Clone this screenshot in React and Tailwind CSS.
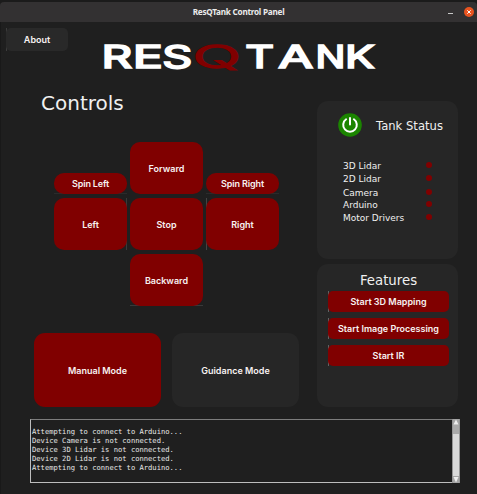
import React from "react";

const POPPINS = "font-['Inter','Open_Sans',sans-serif] font-semibold text-[#f7f1f1] whitespace-nowrap";
const DEJAVU = "font-['DejaVu_Sans',sans-serif] text-[#f0f0f0] whitespace-nowrap";

// Every button sits on a thin rectangle whose edge shows at the rounded corners.
function Button({ children, frame = "", className = "" }) {
  return (
    <div className={`flex ${frame}`}>
      <button
        className={`flex flex-1 items-center justify-center bg-[#800000] text-[9px] leading-none ${POPPINS} ${className}`}
      >
        {children}
      </button>
    </div>
  );
}

function TitleBar() {
  return (
    <div className="mt-[2px] flex h-5 items-center rounded-t-[4px] bg-[#333132]">
      <div className="w-[60px]" />
      <div className="flex-1 text-center font-['Noto_Sans','Open_Sans',sans-serif] text-[8.2px] leading-none font-bold tracking-[-0.25px] text-[#ececec]">
        ResQTank Control Panel
      </div>
      <div className="flex w-[60px] items-center justify-end gap-[11px] pr-[3px]">
        <div className="mt-[3px] h-px w-[5px] bg-[#c8c8c8]" />
        <svg className="h-[10px] w-[10px]" viewBox="0 0 10 10">
          <circle cx="5" cy="5" r="5" fill="#e95420" />
          <path d="M3.3 3.3 6.7 6.7M6.7 3.3 3.3 6.7" stroke="#fff" strokeWidth="1" />
        </svg>
      </div>
    </div>
  );
}

// letter, left edge, horizontal stretch, weight, outline width, colour
const LETTERS = [
  ["R", -1.6, 1.54, 400, 1.7, "#fff"],
  ["E", 29.8, 1.62, 400, 1.7, "#fff"],
  ["S", 59.3, 1.51, 400, 1.7, "#fff"],
  ["Q", 89.8, 2.04, 300, 1.5, "#800000"],
  ["T", 142.3, 1.44, 400, 1.7, "#fff"],
  ["A", 175.3, 1.63, 400, 1.7, "#fff"],
  ["N", 212.5, 1.28, 400, 1.7, "#fff"],
  ["K", 242, 1.42, 400, 1.7, "#fff"],
];

function Logo() {
  return (
    <svg className="mt-[19px] ml-[35px] h-[36px] w-[280px] overflow-visible" viewBox="0 0 280 36" aria-label="RESQTANK">
      {LETTERS.map(([c, x, s, weight, outline, fill]) => (
        <text
          key={c}
          transform={`translate(${x} 27.2) scale(${s} 1)`}
          fontFamily="Inter, sans-serif"
          fontSize="31"
          fontWeight={weight}
          fill={fill}
          stroke={fill}
          strokeWidth={outline}
        >
          {c}
        </text>
      ))}
    </svg>
  );
}

const DEVICES = [
  ["3D Lidar", "h-[13.5px]"],
  ["2D Lidar", "h-[13.5px]"],
  ["Camera", "h-[13px]"],
  ["Arduino", "h-[12.5px]"],
  ["Motor Drivers", "h-[13px]"],
];

function StatusPanel() {
  return (
    <section className="h-[158px] rounded-[11px] bg-[#262626] pt-3">
      <div className="flex h-6 items-center pl-[21px]">
        <svg className="h-6 w-6" viewBox="0 0 24 24">
          <circle cx="12" cy="12" r="11.8" fill="#1b8500" />
          <path d="M8.1 6.3A6.8 6.8 0 1 0 15.9 6.3" fill="none" stroke="#fff" strokeWidth="2" strokeLinecap="round" />
          <path d="M12 5v6.6" stroke="#fff" strokeWidth="2" strokeLinecap="round" />
        </svg>
        <h2 className={`mt-[3px] ml-[14px] text-[11.6px] leading-none ${DEJAVU}`}>Tank Status</h2>
      </div>
      <ul className="mt-[22.6px] pr-[26px] pl-[26px]">
        {DEVICES.map(([name, height]) => (
          <li key={name} className={`flex items-center justify-between ${height}`}>
            <span className={`text-[9px] leading-none ${DEJAVU}`}>{name}</span>
            <span className="mb-[3px] h-[6px] w-[6px] rounded-full bg-[#800000]" />
          </li>
        ))}
      </ul>
    </section>
  );
}

function FeaturesPanel() {
  const frame = "h-[21px] border-l border-[#626262]";
  const shape = "-ml-px rounded-[5px]";
  return (
    <section className="h-[143px] rounded-[11px] bg-[#262626] pt-[9px] pr-[9px] pl-[11px]">
      <h2 className={`h-[18px] text-center text-[13.3px] leading-[15px] ${DEJAVU}`}>Features</h2>
      <div className="flex flex-col gap-[6px]">
        <Button frame={frame} className={shape}>Start 3D Mapping</Button>
        <Button frame={frame} className={shape}>Start Image Processing</Button>
        <Button frame={frame} className={shape}>Start IR</Button>
      </div>
    </section>
  );
}

function DrivePad() {
  return (
    <div className="ml-5 grid w-[225px] grid-cols-3 grid-rows-[52px_52px_52px] gap-x-[3px] gap-y-[4px]">
      <Button frame="h-[21px] self-end border-b border-[#2b2b2b]" className="-mb-px rounded-[10px] tracking-[-0.15px]">Spin Left</Button>
      <Button className="rounded-[10px]">Forward</Button>
      <Button frame="h-[21px] self-end border-b border-[#2b2b2b]" className="-mb-px rounded-[10px] tracking-[-0.1px]">Spin Right</Button>
      <Button frame="border-r border-[#3a3a3a]" className="-mr-px rounded-[10px]">Left</Button>
      <Button className="rounded-[10px]">Stop</Button>
      <Button frame="border-l border-[#444]" className="-ml-px rounded-[10px]">Right</Button>
      <Button frame="col-start-2 border-b border-[#393939]" className="-mb-px rounded-[10px]">Backward</Button>
    </div>
  );
}

const LOG = `Attempting to connect to Arduino...
Device Camera is not connected.
Device 3D Lidar is not connected.
Device 2D Lidar is not connected.
Attempting to connect to Arduino...`;

function Console() {
  return (
    <div className="mt-3 ml-[30px] flex h-[64px] w-[430px]">
      <pre className="flex-1 border border-t-[#7d7d7d] border-r-0 border-b-[#bdbdbd] border-l-[#bdbdbd] pt-[6.6px] pl-px font-['DejaVu_Sans_Mono',monospace] text-[7.15px] leading-[9.2px] text-[#e6e6e6]">
        {LOG}
      </pre>
      <div className="flex w-2 flex-col items-center border-x border-[#969696] bg-[#d9d9d9]">
        <svg className="h-[6px] w-[6px] bg-[#a5a5a5]" viewBox="0 0 6 6">
          <path d="M3 .5 5.5 5.5H.5Z" fill="#eee" />
        </svg>
        <div className="h-[9px] w-full bg-[#aaaaaa]" />
        <div className="flex-1" />
        <svg className="h-[7px] w-[6px] bg-[#a5a5a5]" viewBox="0 0 6 7">
          <path d="M.5 1H5.5L3 6.5Z" fill="#eee" />
        </svg>
      </div>
    </div>
  );
}

export default function App() {
  return (
    <div className="h-[494px] w-[477px] overflow-hidden bg-[#1b1b1b]">
      <TitleBar />
      <div className="h-[472px] border-l border-[#191919] bg-[#1f1f1f]">
        <div className="-ml-px">
          <header className="flex h-[79px] items-start pl-[6px]">
            <div className="mt-[6px] flex h-[23px] w-[62px] border-l border-[#3d3d3d]">
              <button className={`-ml-px block h-full w-[62px] rounded-[5px] bg-[#292929] text-[9px] leading-none ${POPPINS}`}>
                About
              </button>
            </div>
            <Logo />
          </header>
          <main className="flex items-start pl-[34px]">
            <div className="w-[283px]">
              <h1 className={`-mt-[10px] h-[51px] pl-[7px] text-[20px] leading-[24px] ${DEJAVU}`}>Controls</h1>
              <DrivePad />
              <div className="mt-[27px] flex gap-[11px]">
                <Button frame="h-[74px] w-[127px]" className="rounded-[11px]">Manual Mode</Button>
                <Button frame="h-[74px] w-[127px]" className="rounded-[11px] bg-[#262626]!">Guidance Mode</Button>
              </div>
            </div>
            <div className="flex w-[141px] flex-col gap-[5px]">
              <StatusPanel />
              <FeaturesPanel />
            </div>
          </main>
          <Console />
        </div>
      </div>
    </div>
  );
}
